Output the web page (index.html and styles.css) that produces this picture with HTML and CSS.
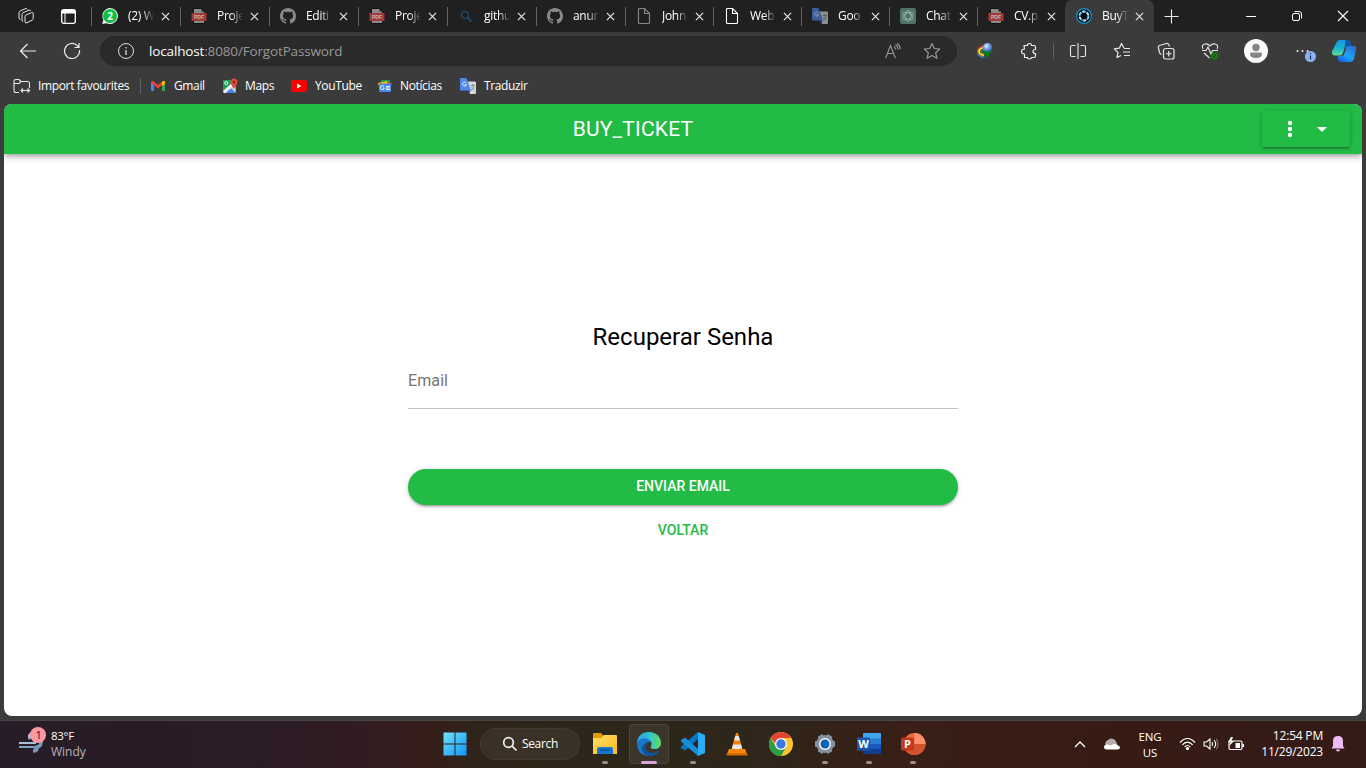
FILE: index.html
```html
<!DOCTYPE html>
<html lang="pt">
<head>
<meta charset="utf-8">
<title>BuyTicket</title>
<link rel="stylesheet" href="styles.css">
</head>
<body>
<svg width="0" height="0" class="defs" aria-hidden="true">
  <defs>
    <linearGradient id="gWin" x1="0" y1="0" x2="1" y2="1"><stop offset="0" stop-color="#6fe3ff"/><stop offset="1" stop-color="#0f94f5"/></linearGradient>
    <linearGradient id="gFold" x1="0" y1="0" x2="1" y2="1"><stop offset="0" stop-color="#ffdc6b"/><stop offset="1" stop-color="#fdbb1c"/></linearGradient>
    <linearGradient id="gEdge" x1="0" y1="0.3" x2="1" y2="0.3"><stop offset="0" stop-color="#2a9fe8"/><stop offset=".5" stop-color="#33c1d8"/><stop offset="1" stop-color="#62dc5c"/></linearGradient>
    <linearGradient id="gCopA" x1="0" y1="0" x2="0" y2="1"><stop offset="0" stop-color="#1597e0"/><stop offset=".5" stop-color="#15b4cf"/><stop offset="1" stop-color="#62dc9c"/></linearGradient>
    <linearGradient id="gCopB" x1="0" y1="1" x2="0.7" y2="0"><stop offset="0" stop-color="#1450e8"/><stop offset=".5" stop-color="#1ca5f5"/><stop offset="1" stop-color="#2b72d6"/></linearGradient>
    <radialGradient id="gBall" cx=".4" cy=".3" r=".7"><stop offset="0" stop-color="#e3efff"/><stop offset=".5" stop-color="#6c94e0"/><stop offset="1" stop-color="#21469a"/></radialGradient>
    <symbol id="x" viewBox="0 0 10 10"><path d="M1 1l8 8M9 1L1 9" stroke="#e8e8e8" stroke-width="1.3" fill="none"/></symbol>
    <symbol id="pdf" viewBox="0 0 16 16"><path d="M2.5.5h8l3 3v12h-11z" fill="#8b8b8b" stroke="#111"/><path d="M10.5.5v3h3z" fill="#222"/><rect x=".5" y="5" width="15" height="8" fill="#a13b3b"/><text x="8" y="11.1" text-anchor="middle" class="pdf-label">PDF</text></symbol>
    <symbol id="github" viewBox="0 0 16 16"><path fill="#8a8a8a" d="M8 0C3.58 0 0 3.58 0 8c0 3.54 2.29 6.53 5.47 7.59.4.07.55-.17.55-.38v-1.49c-2.01.37-2.53-.49-2.69-.94-.09-.23-.48-.94-.82-1.13-.28-.15-.68-.52-.01-.53.63-.01 1.08.58 1.23.82.72 1.21 1.87.87 2.33.66.07-.52.28-.87.51-1.07-1.78-.2-3.64-.89-3.64-3.95 0-.87.31-1.59.82-2.15-.08-.2-.36-1.02.08-2.12 0 0 .67-.21 2.2.82a7.6 7.6 0 0 1 4 0c1.53-1.04 2.2-.82 2.2-.82.44 1.1.16 1.92.08 2.12.51.56.82 1.27.82 2.15 0 3.07-1.87 3.75-3.65 3.95.29.25.54.73.54 1.48v2.2c0 .21.15.46.55.38A8 8 0 0 0 16 8c0-4.42-3.58-8-8-8z"/></symbol>
    <symbol id="page" viewBox="0 0 16 16"><path d="M2.5 1.5q0-1 1-1h5l5 5v9q0 1-1 1h-9q-1 0-1-1zM8.500.5v5h5" fill="none" stroke="currentColor" stroke-width="1.1"/></symbol>
    <symbol id="translate" viewBox="0 0 16 16"><path d="M6 3.500h9q1 0 1 1v10.500q0 1-1 1h-5z" fill="#d5d7d9"/><path d="M10.500 7.500h4.500M12.500 6v1.500M14.500 7.500q-1 3-4 5M11.500 9l3 3.500" stroke="#64858c" stroke-width=".8" fill="none"/><path d="M8 12.500h3l-2.500 3z" fill="#2c49ad"/><path d="M1 0h5.500l4.500 12.500H1q-1 0-1-1V1q0-1 1-1z" fill="#5087ee"/><path d="M6.200 5A2 2 0 1 0 6.500 6.700H4.600" stroke="#eee" stroke-width="1" fill="none"/></symbol>
  </defs>
</svg>

<header class="tabstrip">
  <div class="tab-tools">
    <svg width="18" height="18" viewBox="0 0 18 18" fill="none" stroke="#e6e6e6" stroke-width="1" stroke-linejoin="round"><path d="M8.500 8.200L14.500 5.600q1.700-.6 1.700 1v5q0 1-1 1.500l-5.200 2.600q-2 .8-2-1V9.500q0-.9.500-1.300z"/><path d="M6.200 14.500q-1.200 0-1.200-1.500V7.200q0-1 1-1.500L12 3.200q1.500-.4 1.800.8"/><path d="M3.500 12.500Q2 12.500 2 11V5.500q0-1 1-1.500l5.500-2.400q1.500-.4 2 .8"/></svg>
    <svg width="15" height="15" viewBox="0 0 15 15"><rect x=".7" y=".7" width="13.600" height="13.600" rx="2" fill="none" stroke="#fff" stroke-width="1.300"/><path d="M1 1h13v3.500H1z" fill="#fff"/><path d="M4 4v10" stroke="#fff"/></svg>
  </div>
  <nav class="tabs">
    <div class="tab wide"><svg width="16" height="16" viewBox="0 0 16 16"><path d="M8 0a8 8 0 1 1-3.500 15.200L.3 16l1-4.200A8 8 0 0 1 8 0z" fill="#eee"/><circle cx="8" cy="8" r="7" fill="#0ac145"/><text x="8" y="11.600" text-anchor="middle" class="wa-label">2</text></svg><span>(2) W</span><svg class="close"><use href="#x"/></svg></div>
    <div class="tab wide"><svg width="16" height="16"><use href="#pdf"/></svg><span>Proje</span><svg class="close"><use href="#x"/></svg></div>
    <div class="tab wide"><svg width="16" height="16"><use href="#github"/></svg><span>Editi</span><svg class="close"><use href="#x"/></svg></div>
    <div class="tab wide"><svg width="16" height="16"><use href="#pdf"/></svg><span>Proje</span><svg class="close"><use href="#x"/></svg></div>
    <div class="tab wide"><svg width="16" height="16" viewBox="0 0 16 16" fill="none" stroke="#1b466d" stroke-width="1.500"><circle cx="7" cy="7" r="3.600"/><path d="M9.700 9.700l3.800 3.800" stroke-width="2"/></svg><span>githu</span><svg class="close"><use href="#x"/></svg></div>
    <div class="tab wide"><svg width="16" height="16"><use href="#github"/></svg><span>anur</span><svg class="close"><use href="#x"/></svg></div>
    <div class="tab gray-page"><svg width="16" height="16"><use href="#page"/></svg><span>John</span><svg class="close"><use href="#x"/></svg></div>
    <div class="tab"><svg width="16" height="16"><use href="#page"/></svg><span>Web</span><svg class="close"><use href="#x"/></svg></div>
    <div class="tab"><svg class="dim" width="16" height="16"><use href="#translate"/></svg><span>Goo</span><svg class="close"><use href="#x"/></svg></div>
    <div class="tab"><svg width="16" height="16" viewBox="0 0 16 16"><rect width="16" height="16" rx="2" fill="#4c7367"/><g fill="none" stroke="#9aaca6" stroke-width=".9"><ellipse cx="8" cy="8" rx="3" ry="5.600"/><ellipse cx="8" cy="8" rx="3" ry="5.600" transform="rotate(60 8 8)"/><ellipse cx="8" cy="8" rx="3" ry="5.600" transform="rotate(120 8 8)"/></g></svg><span>Chat</span><svg class="close"><use href="#x"/></svg></div>
    <div class="tab"><svg width="16" height="16"><use href="#pdf"/></svg><span>CV.p</span><svg class="close"><use href="#x"/></svg></div>
    <div class="tab wide active"><svg width="16" height="16" viewBox="0 0 16 16"><circle cx="8" cy="8" r="7.400" fill="#071019" stroke="#1595d6" stroke-width="1.200"/><circle cx="8" cy="8" r="4.500" stroke="#e8f4fa" stroke-width="1.800" fill="none" stroke-dasharray="3.600 1.110"/><path d="M8 3.500l3.500 1M12.500 8l-1.500 3M8 12.500l-3.500-1M3.500 8L5 5" stroke="#1595d6" stroke-width=".8"/></svg><span>BuyT</span><svg class="close"><use href="#x"/></svg></div>
  </nav>
  <svg class="newtab" width="15" height="15" viewBox="0 0 15 15"><path d="M7.500.5v14M.5 7.500h14" stroke="#eee" stroke-width="1.100"/></svg>
  <div class="winctl">
    <svg width="12" height="12" viewBox="0 0 12 12"><path d="M1 6.500h10" stroke="#fff"/></svg>
    <svg width="12" height="12" viewBox="0 0 12 12" fill="none" stroke="#fff"><rect x="1.500" y="3.500" width="7" height="7" rx="1.500"/><path d="M3.500 1.500h4.500q2.500 0 2.500 2.500v4.500"/></svg>
    <svg width="12" height="12" viewBox="0 0 12 12"><path d="M1 1l10 10M11 1L1 11" stroke="#fff" stroke-width="1.100"/></svg>
  </div>
</header>

<div class="toolbar">
  <div class="cell nav"><svg width="18" height="16" viewBox="0 0 18 16" fill="none" stroke="#eee" stroke-width="1.200"><path d="M17 8H1.500M8.500 1L1.500 8l7 7"/></svg></div>
  <div class="cell reload"><svg width="18" height="18" viewBox="0 0 18 18" fill="none" stroke="#eee" stroke-width="1.200"><path d="M16.500 8A7.500 7.500 0 1 1 14.500 3.800L16 5.500M16 1v4.500h-4.500"/></svg></div>
  <div class="url">
    <svg width="18" height="18" viewBox="0 0 18 18" fill="none" stroke="#ddd"><circle cx="9" cy="9" r="7.500"/><path d="M9 8v5M9 5v1.500" stroke-width="1.300"/></svg>
    <p><b>localhost</b>:8080/ForgotPassword</p>
    <svg class="read" width="16" height="16" viewBox="0 0 16 16" fill="none" stroke="#999" stroke-width="1.100"><path d="M.7 15L5.500 2.500 10.300 15M2.400 10.500h6.200M9 3.500q1.500 1 1.500 3M10.500 1.500q2.500 1.500 2.500 5M12.200.3q3 2 3 6"/></svg>
    <svg width="18" height="18" viewBox="0 0 18 18" fill="none" stroke="#999" stroke-width="1.200" stroke-linejoin="round"><path d="M9 1.500l2.300 5 5.500.6-4.100 3.700 1.200 5.500L9 13.500l-4.900 2.800 1.200-5.500L1.200 7.100l5.500-.6z"/></svg>
  </div>
  <div class="cell"><svg width="18" height="18" viewBox="0 0 18 18" fill="none"><path d="M7 4Q1.500 5.500 1.500 9.500T7 14.500" stroke="#d8381f" stroke-width="1.500"/><path d="M7 5.500Q3 7 3 9.500T8 13.500" stroke="#f3e52a" stroke-width="1.800"/><path d="M7.500 7.500Q5 8.500 5.500 10T9 12" stroke="#3a9a34" stroke-width="1.300"/><path d="M2 12q2 3.500 6.500 3" stroke="#2e8fd8" stroke-width="1.300"/><circle cx="11.500" cy="6" r="5" fill="url(#gBall)"/><path d="M6.500 8.500l3.500 1.200 7-.7-4 3.500-1.500 4.500-2-3.500z" fill="#087d14"/></svg></div>
  <div class="cell"><svg width="18" height="18" viewBox="0 0 18 18" fill="none" stroke="#eee" stroke-width="1.200" stroke-linejoin="round"><path d="M4 3.500h3.500Q7.500 1.500 9.500 1.500t2 2H14q1.500 0 1.500 1.500v2.500q-2.500 0-2.500 2t2.500 2V14q0 1.500-1.500 1.500h-2.500q0 1.500-2 1.500t-2-1.500H4.500V12Q1.500 12 1.500 9.500t3-2.500z"/></svg></div>
  <i class="divider"></i>
  <div class="cell"><svg width="18" height="18" viewBox="0 0 18 18" fill="none" stroke="#e8e8e8" stroke-width="1.100"><path d="M6.500 3.500H3q-1.500 0-1.500 1.500v8q0 1.500 1.500 1.500h3.500M11.500 3.500H15q1.500 0 1.500 1.500v8q0 1.500-1.500 1.500h-3.500M9 1v16"/></svg></div>
  <div class="cell"><svg width="18" height="18" viewBox="0 0 18 18" fill="none" stroke="#e8e8e8" stroke-width="1.200" stroke-linejoin="round"><path d="M11 6L8.500 1.500 6.300 6.200l-5 .7L5 10.500 4 15.500l4-2M11 6.500h6M10 10h7M11 13.500h6"/></svg></div>
  <div class="cell"><svg width="18" height="18" viewBox="0 0 18 18" fill="none" stroke="#e8e8e8" stroke-width="1.200"><path d="M4.500 12.500Q3 12 2.500 10.500L1.300 5.500Q1 4 2.500 3.500L9.500 1.500Q11 1.200 12 3l.5 1.500"/><rect x="6.500" y="6.500" width="10.500" height="10.500" rx="2"/><path d="M11.750 9v5.500M9 11.750h5.500"/></svg></div>
  <div class="cell"><svg width="18" height="18" viewBox="0 0 18 18" fill="none" stroke="#e8e8e8" stroke-width="1.100"><path d="M2 7Q0 3 4 2q3-.5 5 2 2-2.500 5-2 4 1 2 5M1 8.500h4L7 5l3 7 1.500-3.500H17M3 11l5.500 5"/><circle cx="13.500" cy="14" r="3.700" fill="#117d18" stroke="none"/><path d="M12 14l1 1 1.800-2" stroke="#0a5a10"/></svg></div>
  <div class="cell avatar"><svg width="24" height="24" viewBox="0 0 24 24"><circle cx="12" cy="12" r="12" fill="#fafafa"/><circle cx="12" cy="8.500" r="3.700" fill="#858585"/><path d="M7.500 13.500h9q1.500 0 1.500 1.500 0 4-6 4t-6-4q0-1.500 1.500-1.500z" fill="#858585"/></svg></div>
  <div class="cell more"><svg width="24" height="24" viewBox="0 0 24 24"><path d="M5.500 12h0M10.500 12h0M15.500 12h0" stroke="#eee" stroke-width="2" stroke-linecap="round"/><circle cx="18.500" cy="17.500" r="5.500" fill="#8ab4f8"/><path d="M18.500 16.500v4M18.500 14v1.300" stroke="#243654" stroke-width="1.300"/></svg></div>
  <div class="cell copilot"><svg width="26" height="26" viewBox="0 0 26 26"><path d="M6 3.500Q6.700 2 8.500 2h9q-2 .5-2.500 3l-2.500 8.500Q11.500 17.500 8.500 17.500H4q-3.500 0-3-4z" fill="url(#gCopA)"/><path d="M14.500 2h3q2 0 2.500 2l1 4h-4q-3 0-3.500 3z" fill="#13589e"/><path d="M21 8h2.500q2 0 1.500 4l-2 8.500q-1 3.500-4 3.500H10q-2.500 0-3-3l-.5-3H9q2.500 0 3.500-3.500l2-5Q15.500 8 18 8z" fill="url(#gCopB)"/><path d="M13.700 10.500l1.500-.3-2.500 7-1.700 1z" fill="#3b3b3b"/></svg></div>
</div>

<div class="bookmarks">
  <div class="bm import"><svg width="18" height="18" viewBox="0 0 18 18" fill="none" stroke="#e8e8e8" stroke-width="1.100"><path d="M6 15.500H3q-2 0-2-2v-9q0-2 2-2h3l2 2h6.500q2 0 2 2V11M1 6.500h5l2-2M8 13.500h8.500M10 11.500l-2 2 2 2M14.500 11.500l2 2-2 2"/></svg><span>Import favourites</span></div>
  <i class="divider"></i>
  <div class="bm gmail"><svg width="16" height="16" viewBox="0 0 16 16"><path d="M1 4h3v9H1.800q-.8 0-.8-1z" fill="#4285f4"/><path d="M12 4h3v8q0 1-.8 1H12z" fill="#34a853"/><path d="M1 4.500q0-2 2-1.500l5 4 5-4q2-.5 2 1.500L8 10.500z" fill="#ea4335"/><path d="M12 4q3-2.500 3 .5V6l-3 2z" fill="#fbbc04"/></svg><span>Gmail</span></div>
  <div class="bm maps"><svg width="16" height="16" viewBox="0 0 16 16"><rect x="1" y="2" width="13" height="13" rx="1" fill="#1e9e58"/><path d="M2 15l6-6 6 6z" fill="#4784ee"/><path d="M1 13L12 3l2 1v2L4 15H2z" fill="#eee"/><path d="M8.500 9.500l5 5V6z" fill="#d7dde0"/><path d="M4 15l4-4 4 4z" fill="#4784ee"/><circle cx="4.300" cy="5" r="1.500" fill="none" stroke="#fff"/><path d="M12 11Q8.500 6 8.500 4a3.500 3.500 0 0 1 7 0q0 2-3.500 7z" fill="#dd4b3e"/><circle cx="12" cy="4" r="1.200" fill="#7a2018"/></svg><span>Maps</span></div>
  <div class="bm youtube"><svg width="16" height="16" viewBox="0 0 16 16"><rect y="2" width="16" height="12" rx="3" fill="#f00"/><path d="M6 5.500v5L10.500 8z" fill="#fff"/></svg><span>YouTube</span></div>
  <div class="bm news"><svg width="16" height="16" viewBox="0 0 16 16"><path d="M4 2h9v6H4z" fill="#159957"/><path d="M1 5l9-2 2 6-9 3z" fill="#fbbc04"/><path d="M10 4l5 1-2 6z" fill="#ea4335"/><rect x="2" y="5.500" width="12" height="8.500" rx="1" fill="#4388f3"/><path d="M7 8.500a2 2 0 1 0 .3 1.500H6M9 8.500h4M9 10h3.500M9 11.500h4" stroke="#fff" fill="none"/></svg><span>Notícias</span></div>
  <div class="bm traduzir"><svg width="16" height="16"><use href="#translate"/></svg><span>Traduzir</span></div>
</div>

<div class="frame">
  <main class="app">
    <header class="appbar">
      <h1>BUY_TICKET</h1>
      <button class="menu"><svg width="24" height="24" viewBox="0 0 24 24" fill="#fff"><circle cx="12" cy="6" r="2.200"/><circle cx="12" cy="12" r="2.200"/><circle cx="12" cy="18" r="2.200"/></svg><svg width="24" height="24" viewBox="0 0 24 24"><path d="M7 10l5 5 5-5z" fill="#fff"/></svg></button>
    </header>
    <form class="recover">
      <h2>Recuperar Senha</h2>
      <div class="field">Email</div>
      <button type="button" class="send">ENVIAR EMAIL</button>
      <button type="button" class="back">VOLTAR</button>
    </form>
  </main>
</div>

<footer class="taskbar">
  <div class="weather">
    <svg width="28" height="30" viewBox="0 0 28 30"><path d="M12 13q-2-4 2-6" stroke="#9fb9d2" stroke-width="3" fill="none"/><path d="M1 17h17" stroke="#a5c2da" stroke-width="2"/><path d="M1 21h14q4 .5 2.500 4" fill="none" stroke="#7ca5c8" stroke-width="2"/><path d="M15 25q5 0 4-4 5-1 4-7" stroke="#7897b6" stroke-width="3.500" fill="none"/><circle cx="20" cy="9" r="8" fill="#ff98a2"/><text x="20.500" y="13" text-anchor="middle" class="badge-label">1</text></svg>
    <p>83°F<br><span>Windy</span></p>
  </div>
  <div class="apps">
    <div class="app-ico start"><svg width="24" height="24" viewBox="0 0 24 24"><path d="M.5.500h11v11H.5zM12.500.500h11v11h-11zM.5 12.500h11v11H.5zM12.500 12.500h11v11h-11z" fill="url(#gWin)"/></svg></div>
    <div class="search"><svg width="16" height="16" viewBox="0 0 16 16" fill="none" stroke="#f2f2f2" stroke-width="1.700"><circle cx="6.500" cy="6.500" r="4.800"/><path d="M10 10l4.500 4.500"/></svg><span>Search</span></div>
    <div class="app-ico run"><svg width="26" height="24" viewBox="0 0 26 24"><path d="M1 2q0-1 1-1h7l2 2v5H1z" fill="#dc9c07"/><path d="M1 6h8l3-3h12q1 0 1 1v18H1z" fill="url(#gFold)"/><path d="M5 22v-5q0-2 2-2h12q2 0 2 2v5z" fill="#1677cf"/><path d="M8 18h10" stroke="#0754a0" stroke-width="1.500"/></svg></div>
    <div class="app-ico current"><svg width="26" height="26" viewBox="0 0 26 26"><path d="M1 13C1 5 6 1 13 1s12 5 12 11c0 4-3 6-6 6-4 0-5-1.500-4-3 2-3-1-7-6-7-4 0-7 2-8 5z" fill="url(#gEdge)"/><path d="M1 13C2 9 5 7.500 9 7.500c3 0 6 2 6.500 4C11 10 8 13 9 17s5 6 10 5l4-2c-2 3-6 5-10 5C6 25 1 20 1 13z" fill="#1877c9"/><path d="M12 12c-3 2-3 5-1.500 7.500C13 23 19 22.500 23.500 19c-2 4-6 6-10.500 6-5-1-8-5-7-9 .5-2 3-4 6-4z" fill="#0c529c"/></svg></div>
    <div class="app-ico run"><svg width="26" height="26" viewBox="0 0 26 26"><path d="M18 1l7 3v18l-7 3z" fill="#2fabf3"/><path d="M18 1v7L5 19.500 1 17V15.500z" fill="#0878c4"/><path d="M1 10.500V9l4-2.500L18 18v7z" fill="#178fd8"/></svg></div>
    <div class="app-ico"><svg width="24" height="26" viewBox="0 0 24 26"><path d="M4 18h16l2.500 6H1.500z" fill="#f58b00"/><path d="M2 22h20l.5 2.500h-21z" fill="#d86b00"/><path d="M11 2h2l5 18q-6 3-12 0z" fill="#f68208"/><path d="M10.300 5h3.400l1.200 4.500H9zM8 13.500h8l1.100 4q-5 1.500-10.200 0z" fill="#e7e7e7"/></svg></div>
    <div class="app-ico"><svg width="26" height="26" viewBox="0 0 26 26"><circle cx="13" cy="13" r="12" fill="#fbc52b"/><path d="M2.600 7A12 12 0 0 1 23.400 7H13v12z" fill="#e24435"/><path d="M2.600 7A12 12 0 0 0 13 25l5.200-9-10.400 0z" fill="#2b9e4b"/><circle cx="13" cy="13" r="6" fill="#fff"/><circle cx="13" cy="13" r="4.700" fill="#3976e6"/></svg></div>
    <div class="app-ico run"><svg width="26" height="26" viewBox="0 0 26 26"><circle cx="13" cy="13" r="9" fill="#85919c"/><g stroke="#85919c" stroke-width="5.500" stroke-linejoin="round"><path d="M3 13h20M8 4.300l10 17.400M18 4.300L8 21.700"/></g><circle cx="13" cy="13" r="6" fill="#f5f5f5"/><circle cx="13" cy="13" r="4.500" fill="#0864b3"/></svg></div>
    <div class="app-ico run"><svg width="26" height="24" viewBox="0 0 26 24"><path d="M8 1h16q1 0 1 1v5H7V2q0-1 1-1z" fill="#41a5ee"/><path d="M7 6.500h18V12H7z" fill="#2b7cd3"/><path d="M7 12h18v5.500H7z" fill="#185abd"/><path d="M7 17h18v4q0 1-1 1H8q-1 0-1-1z" fill="#103f91"/><rect x="1" y="5.500" width="13" height="13" rx="1" fill="#1d55b3"/><text x="7.500" y="16" text-anchor="middle" class="office-label">W</text></svg></div>
    <div class="app-ico run"><svg width="26" height="24" viewBox="0 0 26 24"><circle cx="14.500" cy="12" r="11" fill="#ed6c47"/><path d="M14.500 1a11 11 0 0 1 11 11h-11z" fill="#ff8f6b"/><path d="M3.500 12h22a11 11 0 0 1-22 0z" fill="#d35230"/><rect x="1" y="5.500" width="13" height="13" rx="1" fill="#c4391d"/><text x="7.500" y="16" text-anchor="middle" class="office-label">P</text></svg></div>
  </div>
  <div class="tray">
    <svg width="12" height="8" viewBox="0 0 12 8"><path d="M1 7l5-5 5 5" fill="none" stroke="#fff" stroke-width="1.400"/></svg>
    <svg width="18" height="12" viewBox="0 0 18 12"><path d="M3 8a4 4 0 0 1 2-6q4-3 7.500.5L15 8z" fill="#b5adab"/><path d="M4 11.500Q1 11.500 1 9t3-2.500q2 0 3.500 1L11 6q3-.5 3.500 1.500 2.500.2 2.500 2t-2.500 2z" fill="#fff"/></svg>
    <p class="lang">ENG<br>US</p>
    <svg width="17" height="14" viewBox="0 0 17 14" fill="none" stroke="#fff" stroke-width="1.200"><path d="M1 5.500q7.500-8 15 0M3.300 7.800q5.200-5.500 10.400 0M5.700 10q2.800-3 5.600 0"/><circle cx="8.500" cy="11.500" r="1" fill="#fff"/></svg>
    <svg width="16" height="14" viewBox="0 0 16 14" fill="none" stroke="#fff" stroke-width="1.100"><path d="M1 5h2.500L7 2v10L3.500 9H1zM9 5q1.500 2 0 4M11 3q3.500 4 0 8"/><path d="M13 1.500q4 5.500 0 11" stroke="#777"/></svg>
    <svg width="18" height="14" viewBox="0 0 18 14"><rect x="2" y="4" width="13" height="8.500" rx="1.500" fill="none" stroke="#fff" stroke-width="1.200"/><path d="M15.500 7h1.500v3h-1.500zM8.500 6H13v5H8.500z" fill="#fff"/><path d="M4 0L1 5h2.500L2 9l5-5H4.500L6 0z" fill="#fff"/></svg>
    <p class="clock">12:54 PM<br>11/29/2023</p>
    <svg width="14" height="16" viewBox="0 0 14 16" fill="#eebbf3"><path d="M7 0q5 0 5 5v5l1.500 2.500H.5L2 10V5q0-5 5-5zM5 13.500h4Q9 15.500 7 15.500t-2-2z"/></svg>
  </div>
</footer>
</body>
</html>
```
FILE: styles.css
```css
* { box-sizing: border-box; }
body { margin: 0; width: 1366px; height: 768px; overflow: hidden; background: #3b3b3b; color: #fff; font: 12px "Open Sans", "Noto Sans", sans-serif; display: flex; flex-direction: column; }
p, h1, h2 { margin: 0; font-weight: 400; }
svg { display: block; flex: none; }
button { border: 0; padding: 0; color: inherit; font: inherit; }
.defs { position: absolute; }

.tabstrip { height: 32px; background: #202020; display: flex; align-items: center; }
.tab-tools { width: 91px; flex: none; display: flex; align-items: center; gap: 26px; padding-left: 17px; }
.tabs { display: flex; width: 1063px; height: 32px; flex: none; }
.tab { width: 88px; flex: none; display: flex; align-items: center; padding-left: 11px; position: relative; color: #fff; }
.tab.wide { width: 89px; }
.tab::before { content: ""; position: absolute; left: 0; top: 7px; width: 1px; height: 19px; background: #666; }
.tab span { margin: -1px 0 0 10px; width: 26px; white-space: nowrap; letter-spacing: -0.3px; mask-image: linear-gradient(90deg, #000 55%, transparent 100%); }
.tab .close { width: 9px; height: 9px; margin-left: 7px; }
.tab.active { background: #3b3b3b; border-radius: 7px 7px 0 0; }
.tab.active::before { display: none; }
.gray-page svg:first-child { color: #888; }
.dim { opacity: .6; }
.newtab { margin-left: 10px; }
.winctl { margin-left: auto; display: flex; gap: 34px; padding-right: 17px; }
.pdf-label { font: bold 5px "Liberation Sans", sans-serif; fill: #c8b5b5; }
.wa-label { font: bold 10px "Open Sans", sans-serif; fill: #fff; }

.toolbar { height: 38px; display: flex; align-items: center; }
.cell { width: 44px; display: flex; justify-content: center; flex: none; }
.nav { width: 56px; }
.reload { padding-right: 12px; }
.url { width: 857px; height: 30px; border-radius: 15px; background: #2a2a2a; display: flex; align-items: center; padding: 0 16px 0 17px; margin-right: 6px; flex: none; }
.url p { margin-left: 14px; flex: 1; font-size: 13.500px; letter-spacing: -0.15px; color: #999; }
.url b { font-weight: 400; color: #fff; }
.read { margin-right: 22px; }
.divider { width: 1px; height: 16px; background: #626262; }
.toolbar .divider { margin: 0 1px 0 2px; }
.divider + .cell { margin-left: 1px; }
.avatar { width: 48px; }
.more { width: 44px; padding-left: 3px; }
.copilot { width: 42px; padding-right: 2px; }

.bookmarks { height: 34px; display: flex; align-items: center; padding: 0 0 2px 13px; letter-spacing: -0.36px; }
.bm { display: flex; align-items: center; gap: 7px; white-space: nowrap; }
.bm span { margin-top: -1px; }
.import { width: 127px; }
.gmail { width: 72px; margin-left: 9px; gap: 8px; }
.maps { width: 69px; }
.youtube { width: 86px; gap: 8px; }
.news { width: 83px; }
.traduzir { gap: 8px; }

.frame { height: 617px; padding: 0 4px 5px; border-bottom: 1px solid #474343; }
.app { height: 612px; background: #fff; border-radius: 8px; overflow: hidden; font-family: Roboto, sans-serif; display: flex; flex-direction: column; }
.appbar { height: 50px; flex: none; display: flex; align-items: center; padding-right: 12px; background: #22bb46; box-shadow: 0 2px 4px -1px rgba(0,0,0,.2), 0 4px 5px rgba(0,0,0,.14), 0 1px 10px rgba(0,0,0,.12); }
.appbar h1 { flex: 1; text-align: center; font-size: 21px; letter-spacing: .01em; }
.menu { width: 88px; height: 36px; background: #22bb46; border-radius: 3px; display: flex; align-items: center; padding-left: 16px; gap: 8px; box-shadow: 0 1px 5px rgba(0,0,0,.2), 0 2px 2px rgba(0,0,0,.14), 0 3px 1px -2px rgba(0,0,0,.12); }
.recover { width: 550px; margin: 167px auto 0; display: flex; flex-direction: column; color: #000; }
.recover h2 { font-size: 24px; line-height: 32px; text-align: center; }
.field { height: 56px; border-bottom: 1px solid #c2c2c2; color: #757575; font-size: 16px; line-height: 24px; padding-top: 16px; letter-spacing: .1px; }
.send { height: 36px; margin-top: 60px; padding-bottom: 2px; border-radius: 18px; background: #22bb46; color: #fff; font-size: 14px; font-weight: 500; box-shadow: 0 1px 5px rgba(0,0,0,.2), 0 2px 2px rgba(0,0,0,.14), 0 3px 1px -2px rgba(0,0,0,.12); }
.back { height: 36px; margin-top: 8px; padding-bottom: 2px; background: none; color: #22bb46; font-size: 14px; font-weight: 500; }

.taskbar { height: 47px; display: flex; align-items: center; padding-bottom: 1px; background: linear-gradient(90deg, #271c27 0, #2b1b26 19%, #321c22 27%, #361d1a 31%, #2f2419 35%, #2c271a 48%, #30251a 57%, #381f17 66%, #371b15 80%, #341b17 100%); line-height: 16px; }
.weather { width: 432px; display: flex; align-items: center; gap: 5px; padding: 0 0 0 18px; font-size: 11.500px; letter-spacing: -.3px; }
.weather svg { margin-top: -6px; }
.weather span { color: #bcb5bb; font-size: 12px; letter-spacing: 0; }
.badge-label { font: 11px "Open Sans", sans-serif; fill: #24151a; }
.apps { display: flex; align-items: center; height: 46px; }
.app-ico { width: 44px; height: 42px; display: flex; justify-content: center; align-items: center; position: relative; }
.start { margin-right: 4px; padding-left: 1px; }
.search { width: 100px; height: 32px; margin-right: 3px; border-radius: 16px; background: rgba(255,255,255,.06); border: 1px solid rgba(255,255,255,.035); display: flex; align-items: center; padding-left: 21px; gap: 4px; letter-spacing: -.35px; }
.run::after, .current::after { content: ""; position: absolute; bottom: 1px; left: 19px; width: 6px; height: 3px; border-radius: 2px; background: #969087; }
.current::before { content: ""; position: absolute; inset: 1px 2px; border: 1px solid rgba(255,255,255,.07); background: rgba(255,255,255,.07); border-radius: 4px; }
.current svg { position: relative; }
.current::after { left: 14px; width: 16px; background: #dba0e0; }
.office-label { font: bold 11px "Open Sans", sans-serif; fill: #fff; }
.tray { margin-left: auto; display: flex; align-items: center; padding-right: 21px; font-size: 11.500px; letter-spacing: -.2px; }
.tray svg:nth-child(2) { margin-left: 17px; }
.lang { width: 38px; margin-left: 10px; text-align: center; padding-top: 1px; }
.lang + svg { margin-left: 10px; }
.lang + svg + svg { margin-left: 7px; }
.lang + svg + svg + svg { margin-left: 8px; }
.clock { width: 74px; margin: 0 8px 0 4px; text-align: right; font-size: 12px; }
```
